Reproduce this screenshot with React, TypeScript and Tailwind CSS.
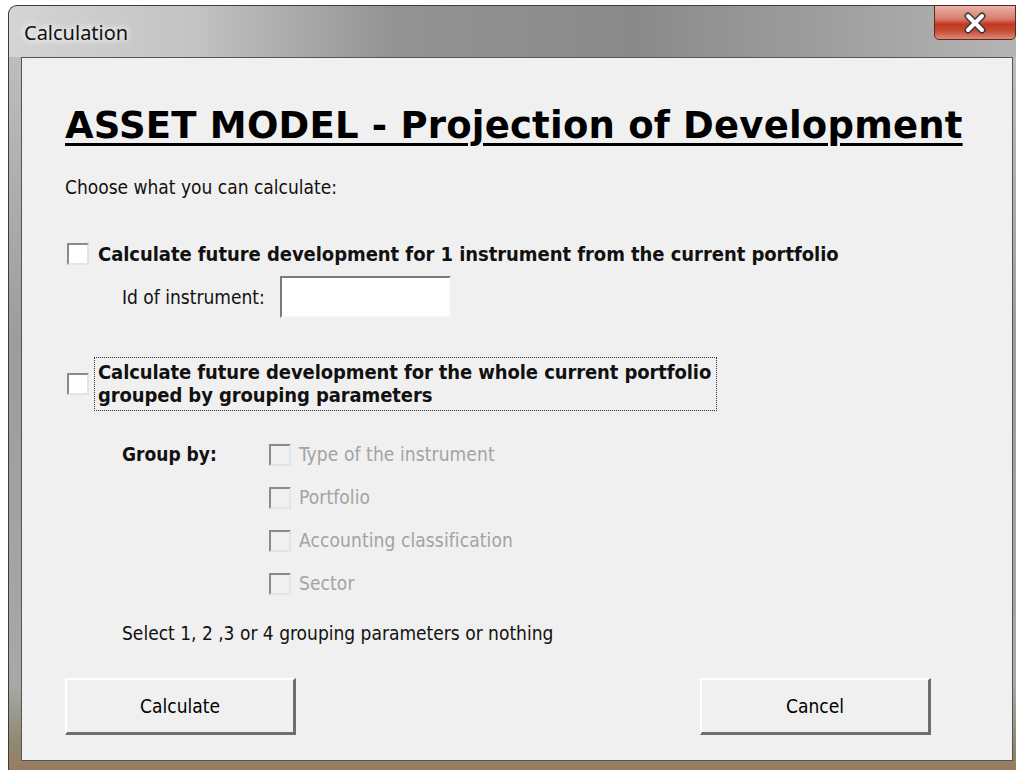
import React from 'react';

const uiFont = { fontFamily: '"DejaVu Sans Condensed", "DejaVu Sans", sans-serif' };

const Check: React.FC<{ disabled?: boolean }> = ({ disabled }) => (
  <div
    className={
      'w-[22px] h-[22px] shrink-0 border-2 border-t-[#8a8a8a] border-l-[#8a8a8a] border-b-[#e4e4e4] border-r-[#e4e4e4] ' +
      (disabled ? 'bg-[#f0f0f0]' : 'bg-white')
    }
  />
);

const Option: React.FC<{ label: string }> = ({ label }) => (
  <div className="flex items-center h-[43px] gap-[8px]">
    <Check disabled />
    <span className="text-[19px] text-[#a3a3a3] tracking-[0.1px]">{label}</span>
  </div>
);

const Button: React.FC<{ label: string }> = ({ label }) => (
  <button className="w-[231px] h-[57px] bg-[#f0f0f0] border-t-2 border-l-2 border-b-[3px] border-r-[3px] border-t-white border-l-white border-b-[#6e6e6e] border-r-[#6e6e6e] text-[19px] text-black">
    {label}
  </button>
);

const CloseIcon = () => (
  <svg width="26" height="22" viewBox="0 0 26 22">
    <path d="M6 4 L20 18 M20 4 L6 18" stroke="#3a3a3a" strokeWidth="7" strokeLinecap="round" />
    <path d="M6 4 L20 18 M20 4 L6 18" stroke="#ffffff" strokeWidth="4" strokeLinecap="round" />
  </svg>
);

export default function App() {
  return (
    <div className="w-[1016px] h-[770px] bg-white overflow-hidden" style={uiFont}>
      <div className="ml-[8px] mt-[5px] h-[765px] rounded-tl-[9px] border-t border-l border-[#3c3c3c] bg-[linear-gradient(90deg,#d4d4d4_0%,#c4c4c4_18%,#939393_38%,#8a8a8a_62%,#9d9d9d_80%,#b4b4b4_100%)] flex flex-col">
        {/* title bar */}
        <div className="h-[51px] flex items-start relative">
          <span
            className="mt-[12px] ml-[15px] text-[20px] text-[#111]"
            style={{ fontFamily: '"Noto Sans", sans-serif', textShadow: '0 0 10px #fff, 0 0 6px #fff' }}
          >
            Calculation
          </span>
          <div className="ml-auto w-[82px] h-[35px] -mt-px rounded-b-[5px] border border-[#5a2a22] bg-[linear-gradient(180deg,#eab3aa_0%,#d97a6a_40%,#c2381f_55%,#c84a34_75%,#e08a76_100%)] flex items-center justify-center">
            <CloseIcon />
          </div>
        </div>
        {/* client area */}
        <div className="flex-1 flex flex-col pl-[12px] pr-[3px] pb-[9px] bg-[linear-gradient(180deg,#bdbdbd_0%,#9c9c9c_40%,#a8a8a8_88%,#8f8a70_96%,#9a7a60_100%)]">
          <div className="flex-1 bg-[#f0f0f0] border border-[#555] flex flex-col pl-[43px]">
            <h1
              className="mt-[45px] text-[37px] font-bold underline decoration-[3px] underline-offset-[5px] text-black leading-[46px] tracking-[0.2px]"
              style={{ fontFamily: '"DejaVu Sans", sans-serif' }}
            >
              ASSET MODEL - Projection of Development
            </h1>
            <p className="mt-[26px] text-[19px] text-[#111] leading-[24px]">Choose what you can calculate:</p>

            <div className="mt-[43px] ml-[2px] flex items-center gap-[9px] h-[24px]">
              <Check />
              <span className="text-[20px] font-bold text-[#111] tracking-[-0.05px] whitespace-nowrap">
                Calculate future development for 1 instrument from the current portfolio
              </span>
            </div>

            <div className="mt-[10px] flex items-center gap-[15px] pl-[57px]">
              <span className="text-[19px] text-[#111]">Id of instrument:</span>
              <div className="w-[171px] h-[42px] bg-white border-2 border-t-[#7a7a7a] border-l-[#7a7a7a] border-b-[#f4f4f4] border-r-[#f4f4f4]" />
            </div>

            <div className="mt-[39px] ml-[2px] flex items-center gap-[5px]">
              <Check />
              <div className="border border-dotted border-[#333] pl-[3px] py-[3px] w-[623px]">
                <p className="text-[20px] font-bold text-[#111] leading-[23px] tracking-[-0.1px] whitespace-nowrap">
                  Calculate future development for the whole current portfolio
                  <br />
                  grouped by grouping parameters
                </p>
              </div>
            </div>

            <div className="mt-[22px] flex pl-[57px]">
              <span className="w-[147px] h-[43px] flex items-center text-[19px] font-bold text-[#111]">Group by:</span>
              <div className="flex flex-col">
                <Option label="Type of the instrument" />
                <Option label="Portfolio" />
                <Option label="Accounting classification" />
                <Option label="Sector" />
              </div>
            </div>

            <p className="mt-[16px] pl-[57px] text-[19px] text-[#111] leading-[24px]">
              Select 1, 2 ,3 or 4 grouping parameters or nothing
            </p>

            <div className="mt-[33px] flex justify-between pr-[81px]">
              <Button label="Calculate" />
              <Button label="Cancel" />
            </div>
          </div>
        </div>
      </div>
    </div>
  );
}
